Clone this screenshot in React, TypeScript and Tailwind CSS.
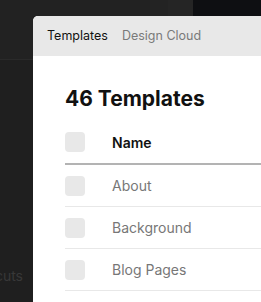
export default function App() {
  const rows = ["About", "Background", "Blog Pages", "Buttons"];
  return (
    <div className="w-[261px] h-[302px] overflow-hidden bg-[#1f1f1f] flex font-['Inter','Liberation_Sans',sans-serif]">
      {/* left backdrop */}
      <div className="w-[33px] shrink-0 flex flex-col">
        <div className="h-[60px] bg-[#222222] border-b border-[#2a2a2a]" />
        <div className="flex-1 flex flex-col justify-end pb-[16px]">
          <div className="flex justify-end overflow-hidden pr-[10px]">
            <span className="whitespace-nowrap text-[14px] text-[#383838]">Shortcuts</span>
          </div>
        </div>
      </div>

      <div className="flex-1 flex flex-col">
        {/* top backdrop strip */}
        <div className="h-[16px] shrink-0 flex">
          <div className="w-[117px] bg-[#222222]" />
          <div className="w-[18px] bg-[#232323]" />
          <div className="w-[25px] bg-[#252525]" />
          <div className="flex-1 bg-[#0e0f12]" />
        </div>

        {/* window */}
        <div className="flex-1 rounded-tl-[5px] overflow-hidden bg-white flex flex-col">
          <div className="h-[40px] shrink-0 bg-[#e8e8e8] flex items-center gap-[14px] pl-[14px] text-[12.5px]">
            <span className="text-[#111]">Templates</span>
            <span className="text-[#7a7a7a]">Design Cloud</span>
          </div>

          <div className="pl-[32px]">
            <h1 className="mt-[30px] text-[21px] leading-[26px] font-bold text-[#111] whitespace-nowrap">46 Templates</h1>

            <div className="mt-[9px] h-[44px] flex items-center border-b-2 border-[#b3b3b3]">
              <div className="w-[20px] h-[20px] rounded-[4px] bg-[#e8e8e8]" />
              <span className="ml-[27px] text-[14px] font-semibold text-[#111]">Name</span>
            </div>

            {rows.map((r) => (
              <div key={r} className="h-[42px] flex items-center border-b border-[#e8e8e8]">
                <div className="w-[20px] h-[20px] rounded-[4px] bg-[#e8e8e8]" />
                <span className="ml-[27px] text-[14px] text-[#777]">{r}</span>
              </div>
            ))}
          </div>
        </div>
      </div>
    </div>
  );
}
